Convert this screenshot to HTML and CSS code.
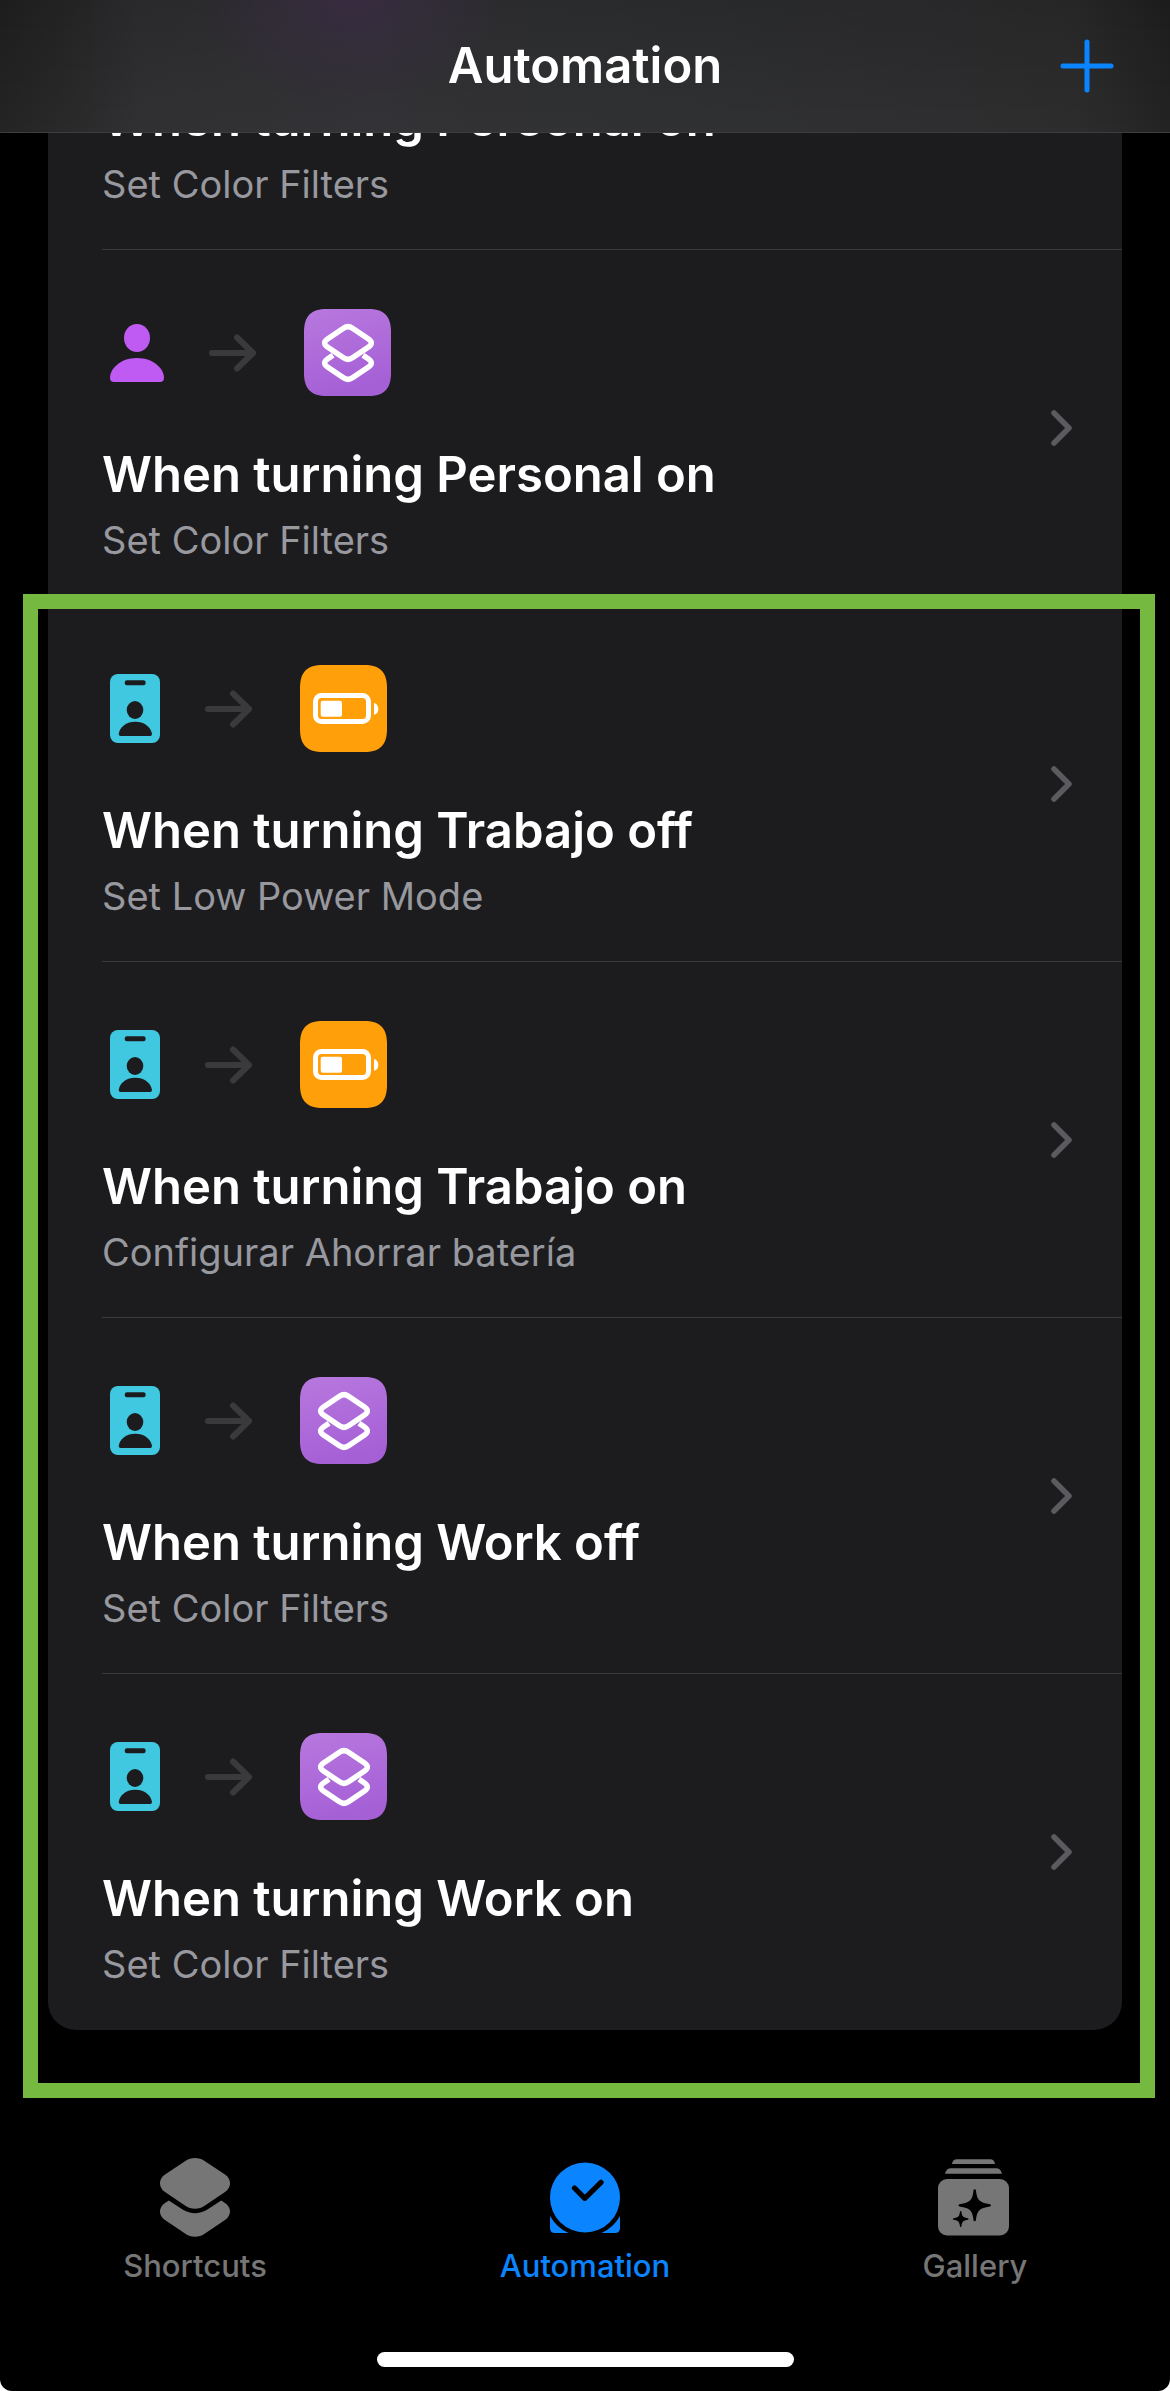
FILE: index.html
```html
<!DOCTYPE html>
<html lang="en">
<head>
<meta charset="utf-8">
<meta name="viewport" content="width=device-width, initial-scale=1">
<title>Automation</title>
<link rel="stylesheet" href="styles.css">
</head>
<body>
<svg class="sprite" aria-hidden="true">
  <defs>
    <linearGradient id="violet" x1="0" y1="0" x2="0.25" y2="1">
      <stop offset="0" stop-color="#b778de"/>
      <stop offset="1" stop-color="#a660d6"/>
    </linearGradient>
    <symbol id="person" viewBox="0 0 54 58">
      <ellipse cx="27" cy="14" rx="13" ry="14"/>
      <path d="M4 58C1.500 58 0 56.500 0 54C0 45 10 34 27 34S54 45 54 54C54 56.500 52.500 58 50 58Z"/>
    </symbol>
    <symbol id="badge" viewBox="0 0 50 69">
      <rect width="50" height="69" rx="8" fill="#40c8e0"/>
      <rect x="14.700" y="6.300" width="21" height="5" rx="2.300" fill="#1c1c1e"/>
      <ellipse cx="25" cy="36" rx="8.300" ry="9" fill="#1c1c1e"/>
      <path d="M10.500 62Q8.700 62 8.700 60C9.500 54 15 47.700 25.300 47.700S41 54 42 60Q42 62 40.200 62Z" fill="#1c1c1e"/>
    </symbol>
    <symbol id="arrow" viewBox="0 0 50 40">
      <path d="M3 20H44M28 4.500L44 20L28 35.500" fill="none" stroke="#3a3a3c" stroke-width="6" stroke-linecap="round" stroke-linejoin="round"/>
    </symbol>
    <symbol id="chevron" viewBox="0 0 21 36">
      <path d="M3 3L18 18L3 33" fill="none" stroke="#5a5a5f" stroke-width="5.500" stroke-linecap="round" stroke-linejoin="round"/>
    </symbol>
    <symbol id="tile-shortcut" viewBox="0 0 87 87">
      <path d="M0 23C0 7 7 0 23 0H64C80 0 87 7 87 23V64C87 80 80 87 64 87H23C7 87 0 80 0 64Z" fill="url(#violet)"/>
      <g fill="none" stroke="#fff" stroke-width="5.500" stroke-linejoin="round">
        <path d="M39.500 19.200C42.300 17.300 45.700 17.300 48.500 19.200L64.500 30C68.300 32.600 68.300 35.400 64.500 38L48.500 48.800C45.700 50.700 42.300 50.700 39.500 48.800L23.500 38C19.700 35.400 19.700 32.600 23.500 30Z"/>
        <path d="M29 46.300L23.500 50C19.700 52.600 19.700 55.400 23.500 58L39.500 68.800C42.300 70.700 45.700 70.700 48.500 68.800L64.500 58C68.300 55.400 68.300 52.600 64.500 50L59 46.300"/>
      </g>
    </symbol>
    <symbol id="tile-battery" viewBox="0 0 87 87">
      <path d="M0 23C0 7 7 0 23 0H64C80 0 87 7 87 23V64C87 80 80 87 64 87H23C7 87 0 80 0 64Z" fill="#ff9f0a"/>
      <rect x="15.500" y="30.500" width="53" height="26" rx="6" fill="none" stroke="#fff" stroke-width="5"/>
      <rect x="20.700" y="35.700" width="21.300" height="16" rx="2" fill="#fff"/>
      <path d="M74 38C77 38.700 78.300 41 78.300 44S77 49 74 49.700Z" fill="#fff"/>
    </symbol>
  </defs>
</svg>

<header class="bar">
  <h1 class="bar-title">Automation</h1>
  <button class="add" type="button" aria-label="New automation">
    <svg width="54" height="54" viewBox="0 0 54 54"><path d="M27 3V51M3 27H51" fill="none" stroke="#0a84ff" stroke-width="5" stroke-linecap="round"/></svg>
  </button>
</header>

<main class="scroller">
  <div class="card">
    <a class="row" href="#">
      <span class="row-body">
        <span class="icons"><svg class="person"><use href="#person"/></svg><svg class="arrow"><use href="#arrow"/></svg><svg class="tile"><use href="#tile-shortcut"/></svg></span>
        <span class="title">When turning Personal on</span>
        <span class="sub">Set Color Filters</span>
      </span>
      <svg class="chevron"><use href="#chevron"/></svg>
    </a>
    <a class="row" href="#">
      <span class="row-body">
        <span class="icons"><svg class="person"><use href="#person"/></svg><svg class="arrow"><use href="#arrow"/></svg><svg class="tile"><use href="#tile-shortcut"/></svg></span>
        <span class="title">When turning Personal on</span>
        <span class="sub">Set Color Filters</span>
      </span>
      <svg class="chevron"><use href="#chevron"/></svg>
    </a>
    <div class="marked">
      <a class="row" href="#">
        <span class="row-body">
          <span class="icons"><svg class="badge"><use href="#badge"/></svg><svg class="arrow"><use href="#arrow"/></svg><svg class="tile"><use href="#tile-battery"/></svg></span>
          <span class="title">When turning Trabajo off</span>
          <span class="sub">Set Low Power Mode</span>
        </span>
        <svg class="chevron"><use href="#chevron"/></svg>
      </a>
      <a class="row" href="#">
        <span class="row-body">
          <span class="icons"><svg class="badge"><use href="#badge"/></svg><svg class="arrow"><use href="#arrow"/></svg><svg class="tile"><use href="#tile-battery"/></svg></span>
          <span class="title">When turning Trabajo on</span>
          <span class="sub" lang="es">Configurar Ahorrar batería</span>
        </span>
        <svg class="chevron"><use href="#chevron"/></svg>
      </a>
      <a class="row" href="#">
        <span class="row-body">
          <span class="icons"><svg class="badge"><use href="#badge"/></svg><svg class="arrow"><use href="#arrow"/></svg><svg class="tile"><use href="#tile-shortcut"/></svg></span>
          <span class="title">When turning Work off</span>
          <span class="sub">Set Color Filters</span>
        </span>
        <svg class="chevron"><use href="#chevron"/></svg>
      </a>
      <a class="row" href="#">
        <span class="row-body">
          <span class="icons"><svg class="badge"><use href="#badge"/></svg><svg class="arrow"><use href="#arrow"/></svg><svg class="tile"><use href="#tile-shortcut"/></svg></span>
          <span class="title">When turning Work on</span>
          <span class="sub">Set Color Filters</span>
        </span>
        <svg class="chevron"><use href="#chevron"/></svg>
      </a>
    </div>
  </div>
</main>

<nav class="tabs">
  <a class="tab" href="#">
    <svg class="tab-icon" viewBox="0 0 80 80">
      <path d="M30 3.300C36 -1 44 -1 50 3.300L70 16.500C76.700 21 76.700 29.500 70 34L50 47.500C44 51.800 36 51.800 30 47.500L10 34C3.300 29.500 3.300 21 10 16.500Z"/>
      <path d="M13.800 42.500L28 51.800C36 56.300 44 56.300 52 51.800L66.200 42.500L70 45C76.700 49.500 76.700 57.500 70 62L50 75.500C44 79.800 36 79.800 30 75.500L10 62C3.300 57.500 3.300 49.500 10 45Z"/>
    </svg>
    <span class="tab-label">Shortcuts</span>
  </a>
  <a class="tab tab-current" href="#" aria-current="page">
    <svg class="tab-icon" viewBox="0 0 80 80">
      <circle cx="40" cy="39.500" r="35"/>
      <path d="M5 58V70Q5 75 10 75H23.500Q12 70 5 58ZM75 58V70Q75 75 70 75H56.500Q68 70 75 58Z"/>
      <path d="M29.500 30L39.800 40.300L56 24.300" fill="none" stroke="#000" stroke-width="5.300" stroke-linecap="round" stroke-linejoin="round"/>
    </svg>
    <span class="tab-label">Automation</span>
  </a>
  <a class="tab" href="#">
    <svg class="tab-icon" viewBox="0 0 80 80">
      <path d="M17 6Q17.500 1.300 22 1.300H55Q59.500 1.300 60 6ZM10 15.700Q11.500 10.300 16 10.300H61Q65.500 10.300 67 15.700Z"/>
      <rect x="3" y="21" width="71" height="56.500" rx="9"/>
      <path fill="#000" d="M38.500 32Q39.700 30.500 40.900 32C42 42 44 44.500 55 46.200Q57 47.300 55 48.400C44 50 42 52.500 40.900 62.500Q39.700 64 38.500 62.500C37.500 52.500 35.500 50 24.500 48.400Q22.500 47.300 24.500 46.200C35.500 44.500 37.500 42 38.500 32Z"/>
      <path fill="#000" d="M25 53.500Q25.700 52.500 26.400 53.500C27 58.500 28 59.500 33 60.300Q34.500 61 33 61.700C28 62.500 27 63.500 26.400 68.500Q25.700 69.500 25 68.500C24.400 63.500 23.400 62.500 18.500 61.700Q17 61 18.500 60.300C23.400 59.500 24.400 58.500 25 53.500Z"/>
    </svg>
    <span class="tab-label">Gallery</span>
  </a>
</nav>
<div class="home"></div>
</body>
</html>
```
FILE: styles.css
```css
* { box-sizing: border-box; }

html { background: #fff; }

body {
  margin: 0;
  min-height: 100vh;
  display: flex;
  flex-direction: column;
  background: #000;
  border-radius: 0 0 12px 12px;
  color: #fff;
  font-family: Inter, "Liberation Sans", sans-serif;
}

a { color: inherit; text-decoration: none; }

svg { display: block; flex: none; }

.sprite { position: absolute; width: 0; height: 0; }

.bar {
  display: grid;
  grid-template-columns: 1fr auto 1fr;
  align-items: center;
  height: 133px;
  padding: 0 56px;
  border-bottom: 1px solid #3d3d40;
  background:
    radial-gradient(ellipse 150px 100px at 30% 0, rgba(70, 45, 90, 0.4), transparent),
    linear-gradient(to bottom, transparent, rgba(255, 255, 255, 0.03)),
    linear-gradient(to right, #1d1d1d 0, #2a292b 12%, #2d2c30 32%, #2a2b2c 50%, #28282a 80%, #262626 92%, #1c1c1c 100%);
}

.bar-title {
  grid-column: 2;
  margin: 0;
  font-size: 49px;
  line-height: 60px;
  font-weight: 600;
}

.add {
  justify-self: end;
  padding: 0;
  border: 0;
  background: none;
}

.scroller {
  overflow: hidden;
  padding: 0 48px 68px;
}

/* The list is scrolled, so its first row is cut off by the bar. */
.card {
  margin-top: -239px;
  padding-left: 54px;
  background: #1c1c1e;
  border-radius: 28px;
}

.row {
  display: flex;
  align-items: center;
  padding-right: 50px;
  border-bottom: 1px solid #3a3a3c;
}

.marked { position: relative; }

.marked::after {
  content: "";
  position: absolute;
  inset: -12px -33px -68px -79px;
  border: 15px solid #76b941;
  pointer-events: none;
}

.marked .row:last-of-type { border-bottom-color: transparent; }

.row-body {
  flex: 1;
  display: flex;
  flex-direction: column;
  padding: 59px 0 40px;
}

.icons {
  display: flex;
  align-items: center;
  gap: 45px;
  padding-left: 8px;
  margin-bottom: 49px;
}

.person { width: 54px; height: 58px; fill: #bf5af2; }
.badge { width: 50px; height: 69px; }
.arrow { width: 50px; height: 40px; }
.tile { width: 87px; height: 87px; }
.chevron { width: 21px; height: 36px; }

.title {
  font-size: 49px;
  line-height: 60px;
  font-weight: 600;
}

.sub {
  margin-top: 10px;
  font-size: 38px;
  line-height: 50px;
  color: #98989f;
}

.tabs {
  display: flex;
  padding-top: 60px;
}

.tab {
  flex: 1;
  display: flex;
  flex-direction: column;
  align-items: center;
  gap: 10px;
  color: #767676;
}

.tab-current { color: #0a84ff; }

.tab-icon { width: 80px; height: 80px; fill: currentColor; }

.tab-label {
  font-size: 31px;
  line-height: 36px;
  font-weight: 500;
}

.home {
  width: 417px;
  max-width: 50%;
  height: 15px;
  margin: 68px auto 24px;
  border-radius: 8px;
  background: #fff;
}
```
